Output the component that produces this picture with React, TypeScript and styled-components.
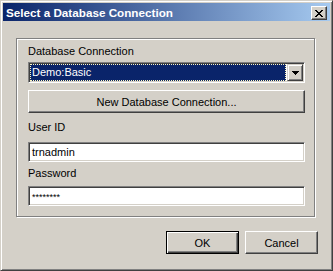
import React from "react";
import styled, { createGlobalStyle } from "styled-components";

const Global = createGlobalStyle`
  html, body { margin: 0; padding: 0; background: #d4d0c8; }
  body { font-family: "Liberation Sans", Arial, sans-serif; font-size: 11px; color: #000; }
  * { box-sizing: border-box; }
`;

const Window = styled.div`
  width: 333px;
  height: 271px;
  background: #d4d0c8;
  border: 1px solid;
  border-color: #d4d0c8 #404040 #404040 #d4d0c8;
  box-shadow: inset 1px 1px #fff, inset -1px -1px #808080;
  padding: 2px;
  display: flex;
  flex-direction: column;
`;

const TitleBar = styled.div`
  height: 18px;
  flex: none;
  background: linear-gradient(to right, #0a246a, #a6caf0);
  display: flex;
  align-items: center;
  justify-content: space-between;
  padding: 0 3px 0 3px;
`;

const Title = styled.span`
  color: #fff;
  font-weight: bold;
  font-size: 11.7px;
  line-height: 13px;
  white-space: nowrap;
`;

const CloseButton = styled.div`
  width: 16px;
  height: 14px;
  margin-top: 2px;
  background: #d4d0c8;
  border: 1px solid;
  border-color: #fff #404040 #404040 #fff;
  box-shadow: inset -1px -1px #808080;
  display: flex;
  align-items: center;
  justify-content: center;
`;

const Body = styled.div`
  flex: 1;
  padding: 17px 13px 0 13px;
  display: flex;
  flex-direction: column;
`;

const Group = styled.div`
  width: 299px;
  height: 179px;
  border: 1px solid #808080;
  box-shadow: inset 1px 1px #fff, 1px 1px #fff;
  padding: 6px 0 0 11px;
  display: flex;
  flex-direction: column;
`;

const Label = styled.div<{ $gap: number }>`
  margin-top: ${(p) => p.$gap}px;
  line-height: 13px;
  height: 13px;
  white-space: nowrap;
`;

const Sunken = styled.div`
  width: 277px;
  background: #fff;
  border: 1px solid;
  border-color: #808080 #fff #fff #808080;
  box-shadow: inset 1px 1px #404040, inset -1px -1px #d4d0c8;
`;

const Combo = styled(Sunken)`
  height: 21px;
  margin-top: 4px;
  padding: 1px;
  display: flex;
`;

const ComboValue = styled.div`
  flex: 1;
  background: #0a246a;
  color: #fff;
  outline: 1px dotted #fff8c0;
  outline-offset: -1px;
  line-height: 17px;
  padding-left: 2px;
  margin-right: 1px;
`;

const DropButton = styled.div`
  width: 16px;
  height: 17px;
  background: #d4d0c8;
  border: 1px solid;
  border-color: #d4d0c8 #404040 #404040 #d4d0c8;
  box-shadow: inset 1px 1px #fff, inset -1px -1px #808080;
  display: flex;
  align-items: center;
  justify-content: center;
`;

const Input = styled(Sunken)<{ $gap: number }>`
  height: 20px;
  margin-top: ${(p) => p.$gap}px;
  padding: 0 3px;
  line-height: 18px;
  white-space: nowrap;
  overflow: hidden;
`;

const Stars = styled.span`
  font-size: 9px;
`;

const Button = styled.div<{ $default?: boolean; $w: number }>`
  width: ${(p) => p.$w}px;
  height: 23px;
  background: #d4d0c8;
  display: flex;
  align-items: center;
  justify-content: center;
  white-space: nowrap;
  border: 1px solid;
  border-color: ${(p) => (p.$default ? "#000" : "#fff #404040 #404040 #fff")};
  box-shadow: ${(p) =>
    p.$default
      ? "inset 1px 1px #fff, inset -1px -1px #404040, inset -2px -2px #808080"
      : "inset -1px -1px #808080"};
`;

const WideButton = styled(Button)`
  margin-top: 7px;
`;

const ButtonRow = styled.div`
  margin-top: 14px;
  display: flex;
  justify-content: flex-end;
  gap: 6px;
  margin-right: -1px;
`;

export default function App() {
  return (
    <>
      <Global />
      <Window>
        <TitleBar>
          <Title>Select a Database Connection</Title>
          <CloseButton>
            <svg width="8" height="7" viewBox="0 0 8 7" shapeRendering="crispEdges">
              <path
                d="M0 0h2v1H0zM6 0h2v1H6zM1 1h2v1H1zM5 1h2v1H5zM2 2h4v1H2zM3 3h2v1H3zM2 4h4v1H2zM1 5h2v1H1zM5 5h2v1H5zM0 6h2v1H0zM6 6h2v1H6z"
                fill="#000"
              />
            </svg>
          </CloseButton>
        </TitleBar>
        <Body>
          <Group>
            <Label $gap={0}>Database Connection</Label>
            <Combo>
              <ComboValue>Demo:Basic</ComboValue>
              <DropButton>
                <svg width="7" height="4" viewBox="0 0 7 4" shapeRendering="crispEdges">
                  <path d="M0 0h7v1H0zM1 1h5v1H1zM2 2h3v1H2zM3 3h1v1H3z" fill="#000" />
                </svg>
              </DropButton>
            </Combo>
            <WideButton $w={277}>New Database Connection...</WideButton>
            <Label $gap={8}>User ID</Label>
            <Input $gap={8}>trnadmin</Input>
            <Label $gap={5}>Password</Label>
            <Input $gap={6}>
              <Stars>********</Stars>
            </Input>
          </Group>
          <ButtonRow>
            <Button $default $w={73}>OK</Button>
            <Button $w={73}>Cancel</Button>
          </ButtonRow>
        </Body>
      </Window>
    </>
  );
}
